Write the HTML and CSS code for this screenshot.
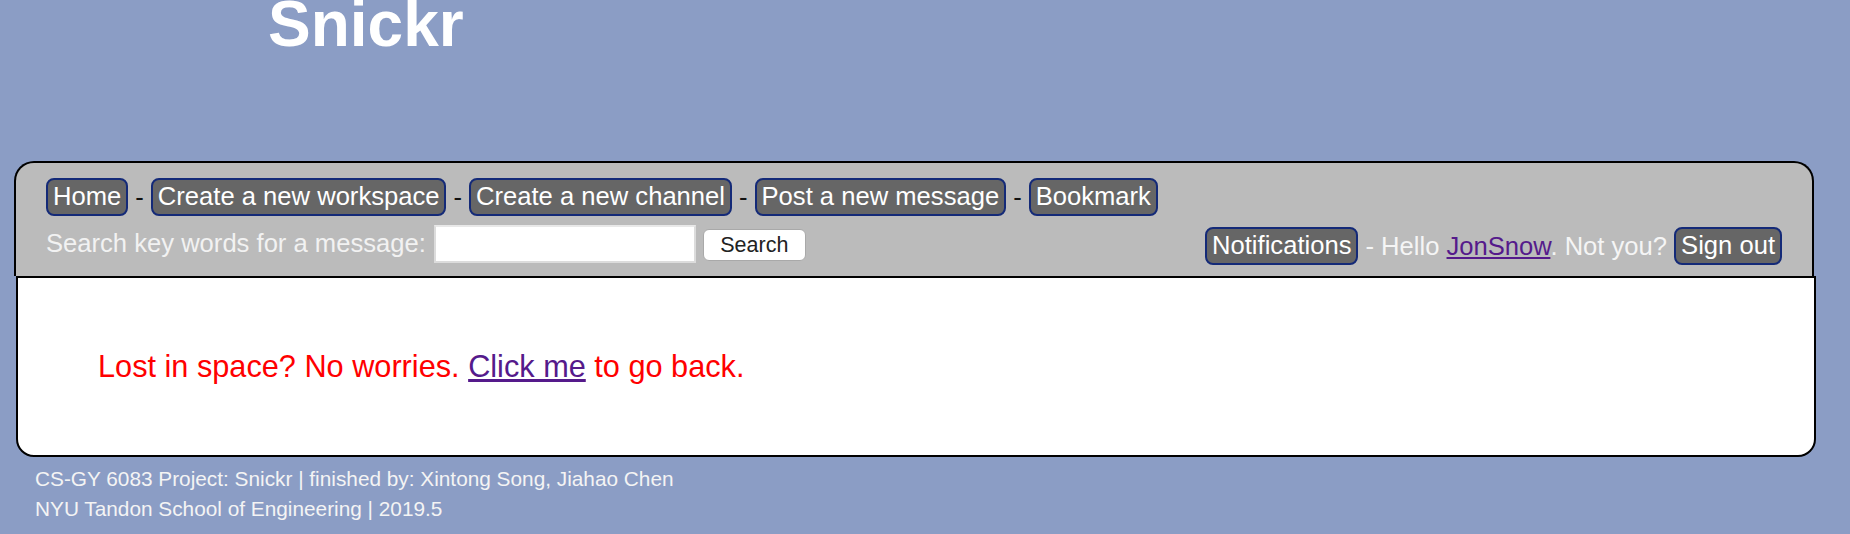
FILE: index.html
```html
<!DOCTYPE html>
<html>
<head>
<meta charset="utf-8">
<title>Snickr</title>
<link rel="stylesheet" href="styles.css">
</head>
<body>
<h1 class="title">Snickr</h1>
<div class="header">
  <div class="nav-row">
    <a class="btn" href="#">Home</a><span class="sep">-</span><a class="btn" href="#">Create a new workspace</a><span class="sep">-</span><a class="btn" href="#">Create a new channel</a><span class="sep">-</span><a class="btn" href="#">Post a new message</a><span class="sep">-</span><a class="btn" href="#">Bookmark</a>
  </div>
  <div class="tool-row">
    <form class="search">
      <span class="label">Search key words for a message:</span>
      <input class="search-input" type="text">
      <button class="search-btn" type="button">Search</button>
    </form>
    <div class="user">
      <a class="btn" href="#">Notifications</a><span class="hello">- Hello <a class="link" href="#">JonSnow</a>. Not you?</span><a class="btn" href="#">Sign out</a>
    </div>
  </div>
</div>
<div class="content">
  <p class="lost">Lost in space? No worries. <a class="link" href="#">Click me</a> to go back.</p>
</div>
<div class="footer">
  <div>CS-GY 6083 Project: Snickr | finished by: Xintong Song, Jiahao Chen</div>
  <div>NYU Tandon School of Engineering | 2019.5</div>
</div>
</body>
</html>
```
FILE: styles.css
```css
html, body {
  margin: 0;
  padding: 0;
}
body {
  background: #8b9dc5;
  font-family: "Liberation Sans", Arial, sans-serif;
  height: 534px;
  overflow: hidden;
}
.title {
  margin: -8px 0 0 268px;
  font-size: 64px;
  line-height: 64px;
  font-weight: bold;
  color: #ffffff;
  height: 64px;
}
.header {
  margin: 105px 0 0 14px;
  width: 1736px;
  height: 98px;
  background: #bbbbbb;
  border: 2px solid #000;
  border-bottom: none;
  border-radius: 20px 20px 0 0;
  padding: 15px 30px 0 30px;
}
.nav-row {
  display: flex;
  align-items: center;
  height: 38px;
  margin-bottom: 8px;
  font-size: 25.6px;
}
.btn {
  display: inline-block;
  background: #666666;
  color: #ffffff;
  text-decoration: none;
  font-size: 25.6px;
  line-height: 29px;
  padding: 2px 5px 3px;
  border: 2px solid #142a78;
  border-radius: 8px;
  white-space: nowrap;
}
.sep {
  color: #111;
  padding: 0 7px;
  font-size: 25.6px;
}
.tool-row {
  display: flex;
  justify-content: space-between;
  align-items: center;
  height: 39px;
}
.search {
  display: flex;
  align-items: center;
  margin: 0;
}
.label {
  color: #f2f2f2;
  font-size: 25.6px;
  margin-right: 8px;
}
.search-input {
  box-sizing: border-box;
  width: 262px;
  height: 38px;
  border: 2px solid #dcdcdc;
  border-top-color: #e8e8e8;
  background: #fff;
  margin: 0 7px 0 0;
  padding: 0;
}
.search-btn {
  width: 103px;
  height: 32px;
  background: #ffffff;
  border: 1px solid #a9a9a9;
  border-radius: 6px;
  color: #222;
  font-family: "Liberation Sans", Arial, sans-serif;
  font-size: 21.5px;
  padding: 0;
  margin-top: 3px;
}
.user {
  display: flex;
  align-items: center;
  margin-top: 5px;
}
.hello {
  color: #f5f5f5;
  font-size: 25.6px;
  padding: 0 7px;
  white-space: nowrap;
}
.link {
  color: #551a8b;
  text-decoration: underline;
}
.content {
  margin-left: 16px;
  height: 177px;
  background: #ffffff;
  border: 2px solid #000;
  border-radius: 0 0 18px 18px;
  display: flex;
  align-items: center;
  padding: 0 0 0 80px;
  box-sizing: content-box;
  width: 1716px;
}
.lost {
  margin: 0;
  color: #ff0000;
  font-size: 30.7px;
}
.footer {
  margin-top: 7px;
  padding-left: 35px;
  color: #f4f4f4;
  font-size: 20.8px;
  line-height: 30px;
}
```
